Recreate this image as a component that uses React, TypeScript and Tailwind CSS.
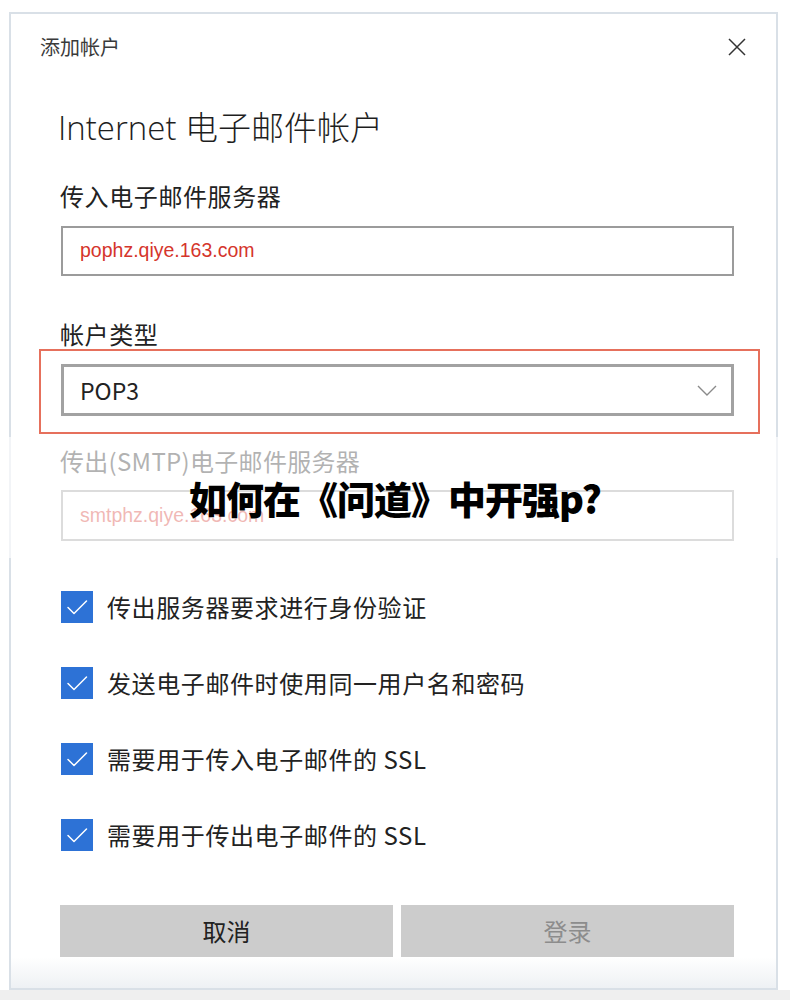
import React from 'react'

const cjk = "font-['Noto_Sans_CJK_SC',sans-serif]"
const label = `${cjk} h-[28px] leading-[28px] text-[24px] tracking-[0.6px] text-[#222]`

function CheckRow({ text }: { text: string }) {
  return (
    <div className="flex items-center h-[32px]">
      <div className="w-[32px] h-[32px] bg-[#2d72d6] flex items-center justify-center shrink-0">
        <svg width="32" height="32" viewBox="0 0 32 32" fill="none">
          <path d="M7 16.5 L13 22.5 L25.5 10" stroke="white" strokeWidth="1.5" strokeLinecap="round" strokeLinejoin="round" />
        </svg>
      </div>
      <span className={`${cjk} ml-[14px] text-[24px] leading-[28px] tracking-[0.6px] text-[#222]`}>{text}</span>
    </div>
  )
}

export default function App() {
  return (
    <div className="relative w-[790px] h-[1000px] bg-white overflow-hidden flex flex-col">
      {/* Dialog */}
      <div className="mt-[12px] ml-[9px] w-[769px] h-[978px] border-2 border-[#d9e0e7] bg-white flex flex-col">
        {/* Header */}
        <div className="mt-[23px] h-[20px] flex items-center justify-between pl-[29px] pr-[30px]">
          <span className={`${cjk} text-[20px] leading-[20px] text-[#3a3a3a]`}>添加帐户</span>
          <svg width="18" height="18" viewBox="0 0 18 18" fill="none">
            <path d="M1 1 L17 17 M17 1 L1 17" stroke="#333" strokeWidth="1.5" />
          </svg>
        </div>

        <div className="pl-[49px] pr-[42px] flex flex-col">
          <div className="mt-[51px] h-[40px] leading-[40px] text-[33px] font-light text-[#1e1e1e] font-['Open_Sans','Noto_Sans_CJK_SC',sans-serif] -ml-[2px]">
            Internet 电子邮件帐户
          </div>

          <div className={`${label} mt-[34px]`}>传入电子邮件服务器</div>
          <div className="mt-[16px] h-[50px] ml-[1px] border-2 border-[#9b9b9b] flex items-center px-[17px]">
            <span className="font-['Liberation_Sans',Arial,sans-serif] text-[19.5px] text-[#d5352c]">pophz.qiye.163.com</span>
          </div>

          <div className={`${label} mt-[44px]`}>帐户类型</div>
          <div className="relative mt-[16px] ml-[1px]">
            <div className="h-[52px] border-[3px] border-[#a2a2a2] flex items-center justify-between pl-[16px] pr-[14px]">
              <span className={`${cjk} text-[23px] text-[#222]`}>POP3</span>
              <svg width="20" height="11" viewBox="0 0 20 11" fill="none">
                <path d="M1 1 L10 10 L19 1" stroke="#8a8a8a" strokeWidth="1.4" />
              </svg>
            </div>
            <div className="absolute -left-[22px] -right-[26px] -top-[15px] -bottom-[18px] border-2 border-solid border-[#e6705c]" />
          </div>

          <div className={`${cjk} mt-[31px] h-[28px] leading-[28px] text-[24px] tracking-[0.3px] text-[#222]`}>传出(SMTP)电子邮件服务器</div>
          <div className="mt-[15px] h-[51px] ml-[1px] border-2 border-[#9b9b9b] flex items-center px-[17px]">
            <span className="font-['Liberation_Sans',Arial,sans-serif] text-[19.5px] text-[#d5352c]">smtphz.qiye.163.com</span>
          </div>

          <div className="mt-[50px] ml-[1px] flex flex-col gap-[44px]">
            <CheckRow text="传出服务器要求进行身份验证" />
            <CheckRow text="发送电子邮件时使用同一用户名和密码" />
            <CheckRow text="需要用于传入电子邮件的 SSL" />
            <CheckRow text="需要用于传出电子邮件的 SSL" />
          </div>

          <div className="mt-[54px] grid grid-cols-2 gap-[8px]">
            <div className={`${cjk} h-[52px] bg-[#cccccc] flex items-center justify-center text-[24px] text-[#222]`}>取消</div>
            <div className={`${cjk} h-[52px] bg-[#cccccc] flex items-center justify-center text-[24px] text-[#8c8c8c]`}>登录</div>
          </div>
        </div>

        <div className="flex-1 bg-gradient-to-b from-white to-[#eef1f4]" />
      </div>
      <div className="flex-1 bg-[#efefef]" />

      {/* Title band overlay */}
      <div className="absolute left-0 right-0 top-[437px] h-[121px] bg-white/65 flex items-center justify-center">
        <span className="font-['Noto_Sans_CJK_SC',sans-serif] font-black text-[38px] leading-none text-black tracking-[-1px]">
          如何在《问道》中开强p?
        </span>
      </div>
    </div>
  )
}
